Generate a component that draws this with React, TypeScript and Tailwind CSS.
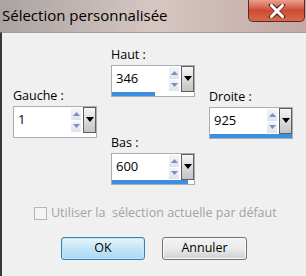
import React from 'react';

function SpinField({ value, bar }: { value: string; bar: number }) {
  return (
    <div className="w-[84px] h-[32px] border border-[#abadb3] bg-white flex flex-col">
      <div className="flex flex-1 min-h-0">
        <div className="flex-1 pl-[4px] pt-[4px] text-[13px] leading-[16px] text-black">{value}</div>
        {/* spinner */}
        <div className="w-[10px] flex flex-col gap-[1px] pt-[1px] pb-[1px] mr-[2px]">
          <div className="flex-1 bg-gradient-to-b from-[#f3f5f9] to-[#dde3ee] flex items-center justify-center">
            <svg width="7" height="4" viewBox="0 0 7 4"><path d="M0 4 L3.5 0 L7 4 Z" fill="#7d8fbf" /></svg>
          </div>
          <div className="flex-1 bg-gradient-to-b from-[#f3f5f9] to-[#dde3ee] flex items-center justify-center">
            <svg width="7" height="4" viewBox="0 0 7 4"><path d="M0 0 L3.5 4 L7 0 Z" fill="#7d8fbf" /></svg>
          </div>
        </div>
        {/* dropdown */}
        <div className="w-[13px] border border-[#5e5e5e] bg-gradient-to-b from-[#f6f6f6] via-[#dcdcdc] to-[#c4c4c4] flex justify-center pt-[9px]">
          <svg width="8" height="5" viewBox="0 0 8 5"><path d="M0 0 L8 0 L4 5 Z" fill="#000" /></svg>
        </div>
      </div>
      <div className="h-[4px] shrink-0">
        <div className="h-full bg-[#3c8ee0]" style={{ width: `${bar}%` }} />
      </div>
    </div>
  );
}

function Field({ label, value, bar }: { label: string; value: string; bar: number }) {
  return (
    <div className="flex flex-col">
      <div className="h-[16px] mb-[2px] text-[12.5px] leading-[16px] text-black">{label}</div>
      <SpinField value={value} bar={bar} />
    </div>
  );
}

export default function App() {
  return (
    <div className="w-[306px] h-[276px] flex flex-col overflow-hidden font-['Open_Sans',sans-serif] bg-[#f0f0f0]">
      {/* Title bar */}
      <div className="h-[32px] shrink-0 flex items-start bg-gradient-to-r from-[#aaa3a2] via-[#d6c6c2] to-[#c2a9a3]">
        <div className="pl-[2px] pt-[5px] text-[15px] leading-[20px] text-black">Sélection personnalisée</div>
        <div className="ml-auto mr-[1px] w-[57px] h-[22px] rounded-b-[5px] border border-[#5a2a22] border-t-0 bg-gradient-to-b from-[#e8a08e] via-[#cc4a32] to-[#d86a4c] flex items-center justify-center">
          <svg width="18" height="14" viewBox="0 0 18 14">
            <path d="M3 1 L9 6 L15 1 M3 13 L9 8 L15 13 M9 7 L3 1 M9 7 L15 13" stroke="#5a2a22" strokeWidth="4.5" fill="none" strokeLinecap="round" />
            <path d="M3.5 1.5 L14.5 12.5 M14.5 1.5 L3.5 12.5" stroke="#fff" strokeWidth="3" strokeLinecap="round" />
          </svg>
        </div>
      </div>

      {/* Client area */}
      <div className="flex-1 flex flex-col border-t border-t-[#9d9d9d] border-l-2 border-l-[#3c3838]">
        <div className="flex pl-[11px] gap-[14px]">
          <div className="mt-[55px]">
            <Field label="Gauche :" value="1" bar={0} />
          </div>
          <div className="mt-[14px] flex flex-col gap-[38px]">
            <Field label="Haut :" value="346" bar={52} />
            <Field label="Bas :" value="600" bar={93} />
          </div>
          <div className="mt-[56px]">
            <Field label="Droite :" value="925" bar={100} />
          </div>
        </div>

        <div className="mt-[21px] pl-[32px] flex items-center gap-[4px] h-[14px]">
          <div className="w-[13px] h-[13px] border border-[#b6b6b6] bg-[#f4f4f4]" />
          <span className="text-[12.5px] leading-[14px] text-[#a3a3a3] whitespace-pre">Utiliser la  sélection actuelle par défaut</span>
        </div>

        <div className="mt-[17px] pl-[59px] flex gap-[17px]">
          <button className="w-[84px] h-[23px] rounded-[3px] border border-[#3c7fb1] bg-gradient-to-b from-[#e8f5fc] via-[#c4e5f6] to-[#a9d9f2] text-[12.5px] text-black shadow-[inset_0_0_0_1px_#bfe7fb]">
            OK
          </button>
          <button className="w-[85px] h-[23px] rounded-[3px] border border-[#707070] bg-gradient-to-b from-[#f2f2f2] via-[#ebebeb] to-[#cfcfcf] text-[12.5px] text-black shadow-[inset_0_0_0_1px_#fbfbfb]">
            Annuler
          </button>
        </div>
      </div>
    </div>
  );
}
